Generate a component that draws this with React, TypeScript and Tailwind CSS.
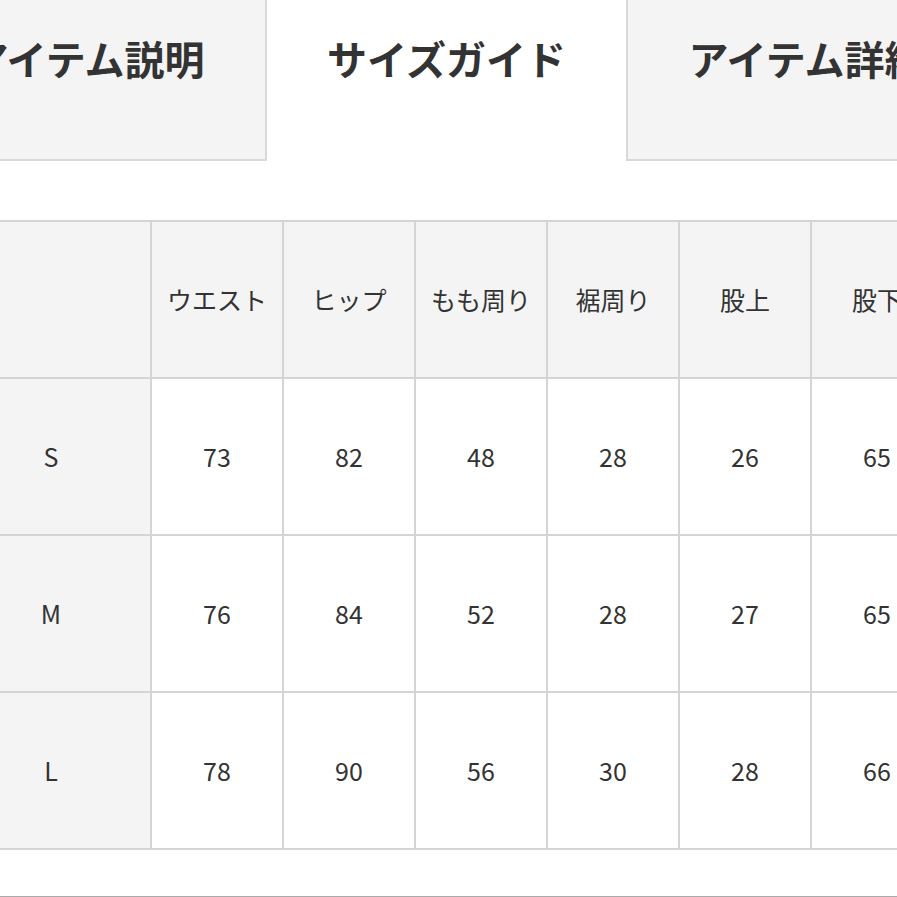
const heads = ["ウエスト", "ヒップ", "もも周り", "裾周り", "股上", "股下", "総丈"];

const rows = [
  { size: "S", vals: ["73", "82", "48", "28", "26", "65", "91"] },
  { size: "M", vals: ["76", "84", "52", "28", "27", "65", "92"] },
  { size: "L", vals: ["78", "90", "56", "30", "28", "66", "94"] },
];

export default function App() {
  return (
    <div
      className="w-[897px] h-[897px] overflow-hidden bg-white text-[#333]"
      style={{ fontFamily: '"Noto Sans CJK JP", "Noto Sans", sans-serif' }}
    >
      <div className="ml-[-92px] w-[1100px]">
        {/* tabs */}
        <div className="flex">
          <div className="w-[359px] h-[161px] bg-[#f4f4f4] border-r-2 border-b-2 border-[#d9d9d9] flex items-start justify-center pt-[30px] text-[40px] font-bold leading-[56px]">
            アイテム説明
          </div>
          <div className="w-[359px] h-[161px] bg-white flex items-start justify-center pt-[30px] text-[40px] font-bold leading-[56px]">
            サイズガイド
          </div>
          <div className="w-[359px] h-[161px] bg-[#f4f4f4] border-l-2 border-b-2 border-[#d9d9d9] flex items-start justify-center pt-[30px] text-[40px] font-bold leading-[56px]">
            アイテム詳細
          </div>
        </div>

        {/* size table */}
        <div className="ml-[42px] mt-[59px] inline-grid grid-cols-[198px_repeat(7,130px)] gap-[2px] p-[2px] bg-[#d4d4d4] text-[25px]">
          <div className="h-[155px] bg-[#f4f4f4]" />
          {heads.map((h) => (
            <div key={h} className="h-[155px] bg-[#f4f4f4] flex items-center justify-center">
              {h}
            </div>
          ))}
          {rows.map((r) => (
            <>
              <div key={r.size} className="h-[155px] bg-[#f4f4f4] flex items-center justify-center">
                {r.size}
              </div>
              {r.vals.map((v, i) => (
                <div key={r.size + i} className="h-[155px] bg-white flex items-center justify-center">
                  {v}
                </div>
              ))}
            </>
          ))}
        </div>

        <div className="mt-[46px] border-t border-[#aaaaaa]" />
      </div>
    </div>
  );
}
